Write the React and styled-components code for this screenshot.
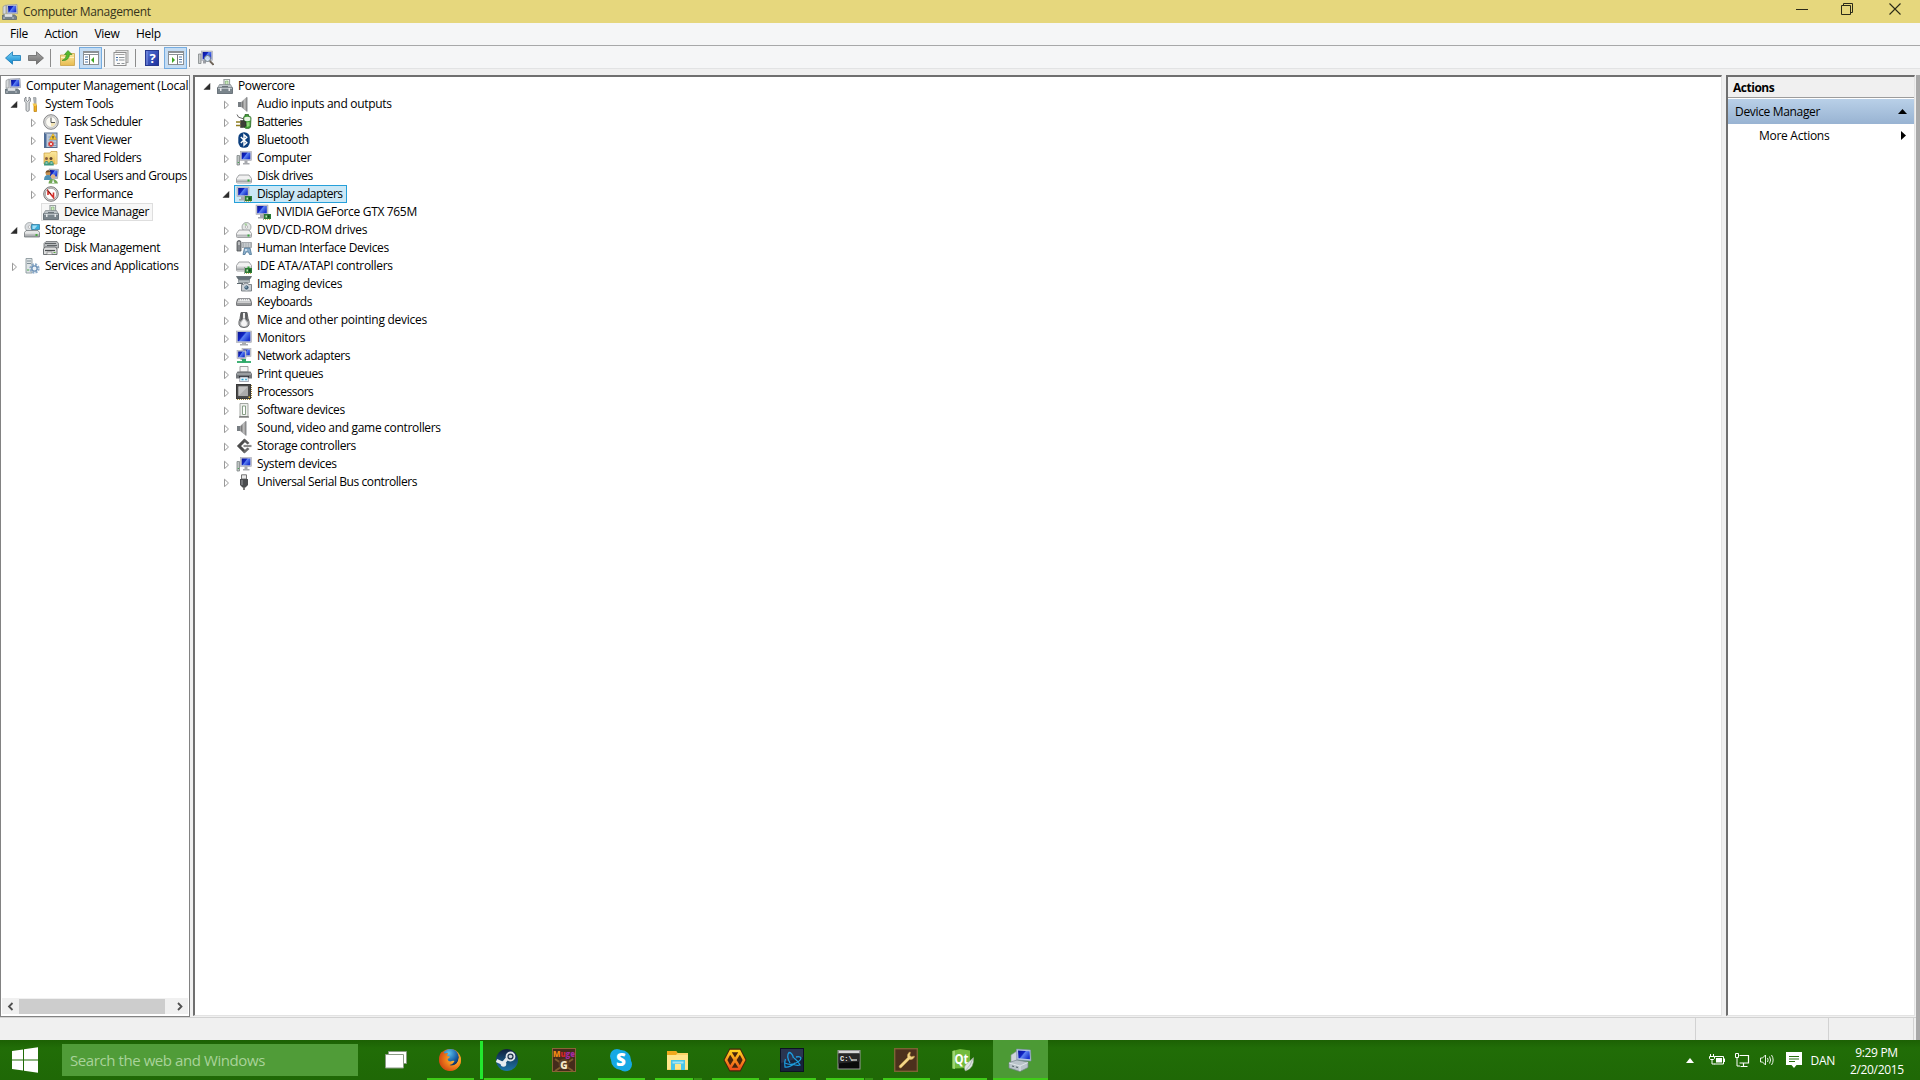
import React from 'react';
import styled, {createGlobalStyle, css} from "styled-components";


const GlobalStyle = createGlobalStyle`
    * {
        box-sizing: border-box;
    }

    body {
        margin: 0;
        overflow: hidden;
        background: #f0f0f0;
        font-family: "Open Sans", "Noto Sans", sans-serif;
        font-size: 12px;
        color: #000;
    }
`

/* ---------- icons ---------- */

const Svg = styled.svg`
    display: block;
    flex: none;
    width: ${({$w}) => $w ?? 16}px;
    height: ${({$h}) => $h ?? 16}px;
`

const DefsSvg = styled(Svg)`
    position: absolute;
`

const Defs = () => (
    <DefsSvg $w={0} $h={0}>
        <defs>
            <linearGradient id="screen" x1="0" y1="0" x2="1" y2="0.6">
                <stop offset="0" stopColor="#0a1590"/>
                <stop offset="0.45" stopColor="#1024c4"/>
                <stop offset="0.55" stopColor="#5c82f2"/>
                <stop offset="1" stopColor="#1a34cf"/>
            </linearGradient>
            <linearGradient id="metal" x1="0" y1="0" x2="0" y2="1">
                <stop offset="0" stopColor="#f4f4f4"/>
                <stop offset="1" stopColor="#9a9da0"/>
            </linearGradient>
            <linearGradient id="darkMetal" x1="0" y1="0" x2="1" y2="0">
                <stop offset="0" stopColor="#5c5c5c"/>
                <stop offset="0.6" stopColor="#c4c4c4"/>
                <stop offset="1" stopColor="#777"/>
            </linearGradient>
            <linearGradient id="blueArrow" x1="0" y1="0" x2="0" y2="1">
                <stop offset="0" stopColor="#7fd4f7"/>
                <stop offset="1" stopColor="#0c86cd"/>
            </linearGradient>
            <linearGradient id="grayArrow" x1="0" y1="0" x2="0" y2="1">
                <stop offset="0" stopColor="#a9a9a9"/>
                <stop offset="1" stopColor="#6f6f6f"/>
            </linearGradient>
            <linearGradient id="folder" x1="0" y1="0" x2="0" y2="1">
                <stop offset="0" stopColor="#fbe9a0"/>
                <stop offset="1" stopColor="#e8bb50"/>
            </linearGradient>
            <linearGradient id="help" x1="0" y1="0" x2="1" y2="1">
                <stop offset="0" stopColor="#5675d8"/>
                <stop offset="1" stopColor="#1c2f9c"/>
            </linearGradient>
            <radialGradient id="fox" cx="0.7" cy="0.4" r="0.8">
                <stop offset="0" stopColor="#ffd23a"/>
                <stop offset="0.5" stopColor="#f0801c"/>
                <stop offset="1" stopColor="#c83a10"/>
            </radialGradient>
            <radialGradient id="globe" cx="0.4" cy="0.25" r="0.8">
                <stop offset="0" stopColor="#5cc3ee"/>
                <stop offset="0.6" stopColor="#1b62a8"/>
                <stop offset="1" stopColor="#0b2450"/>
            </radialGradient>
            <linearGradient id="steam" x1="0" y1="0" x2="0" y2="1">
                <stop offset="0" stopColor="#10203c"/>
                <stop offset="1" stopColor="#1d74a8"/>
            </linearGradient>
            <linearGradient id="orange" x1="0" y1="0" x2="0" y2="1">
                <stop offset="0" stopColor="#ffd21e"/>
                <stop offset="1" stopColor="#f0501a"/>
            </linearGradient>
        </defs>
    </DefsSvg>
)

const Screen = ({x, y, w, h}) => (
    <g>
        <rect x={x} y={y} width={w} height={h} fill="#c9cbd2" stroke="#9a9ca6" strokeWidth="0.5"/>
        <rect x={x + 1.2} y={y + 1} width={w - 2.4} height={h - 2.2} fill="url(#screen)"/>
    </g>
)

const Chip = () => (
    <g>
        <rect x="9" y="10" width="7" height="5" fill="#2b7a35"/>
        <rect x="8" y="9" width="1" height="7" fill="#9aa39a"/>
        <rect x="10.5" y="11.5" width="1.5" height="2" fill="#b9e0a9"/>
        <rect x="13" y="11.5" width="1.5" height="2" fill="#123f18"/>
        <path d="M10 15.5h5" stroke="#c8b85a" strokeDasharray="1 1"/>
    </g>
)

const Drive = ({y = 7, h = 8}) => (
    <g>
        <path d={`M3 ${y}h10l2.500 3.500v${h - 4.5}q0 1-1 1h-13q-1 0-1-1v-${h - 4.5}z`} fill="#f1f1f1" stroke="#8b8e90" strokeWidth="0.8"/>
        <rect x="1" y={y + 3.5} width="14" height={h - 4.5} fill="url(#metal)"/>
        <rect x="11.5" y={y + 4.5} width="2" height="2" fill="#36a83c"/>
    </g>
)

const Computer = () => (
    <>
        <path d="M1 5.5h2.500v9.500H1z" fill="#bfc4c4" stroke="#7f8686" strokeWidth="0.8"/>
        <path d="M1.800 12h1v1h-1z" fill="#2fa03a"/>
        <Screen x={4.5} y={1.5} w={11} h={9}/>
        <path d="M8.500 10.500h3v2.500h2v1.500H7V13h1.500z" fill="#a7a9ae"/>
    </>
)

const Toolbox = () => (
    <>
        <path d="M7 6V1.500h5.500V7" fill="none" stroke="#9aa1a1" strokeWidth="1.200"/>
        <path d="M8.500 3h2.500v4H8.500z" fill="#cfe6c1" stroke="#6aa960" strokeWidth="0.6"/>
        <path d="M2.500 6.500h11l2 3.500H.500z" fill="#bcc3c7" stroke="#7f878b" strokeWidth="0.7"/>
        <path d="M5 8.500h6" stroke="#6a7379"/>
        <rect x="0.5" y="10" width="15" height="5.5" fill="#7a858c" stroke="#59636a" strokeWidth="0.8"/>
        <path d="M1 10.500h14" stroke="#b5bdc2"/>
        <rect x="3" y="10" width="1.5" height="3" fill="#e3e6e8"/>
        <rect x="11.5" y="10" width="1.5" height="3" fill="#e3e6e8"/>
    </>
)

const Speaker = () => (
    <>
        <path d="M1 6h3v5H1z" fill="#777d82"/>
        <path d="M4.500 6l5.500-5v14.500l-5.500-4.500z" fill="url(#darkMetal)" stroke="#909397" strokeWidth="0.5"/>
        <path d="M10.500 1.500v14" stroke="#c2c5c8"/>
    </>
)

const icons = {
    management: (
        <>
            <path d="M1 2.500l3-1.500v9H1z" fill="#d6d9db" stroke="#8f9496" strokeWidth="0.7"/>
            <path d="M4.500 1l10.500-.5.5 9-10.500.500z" fill="#c3c8d4" stroke="#8b91a0" strokeWidth="0.6"/>
            <path d="M6 2l8-.3.4 6.500-8 .4z" fill="url(#screen)"/>
            <path d="M.500 11h12l2 1.500v3H.500z" fill="#77838c" stroke="#535e66" strokeWidth="0.7"/>
            <path d="M3 10.500h7v2H3zM1 14h2M10 14h2" fill="#dfe3e5" stroke="#dfe3e5" strokeWidth="0.7"/>
        </>
    ),
    tools: (
        <>
            <path d="M2 1v3l1.500 1.500L5 4V1q2 .8 1.500 3Q6.500 6 5.200 6.800v7.700q-1.700 2-3.200 0V6.800Q0 5.500.500 3.500.700 1.700 2 1z" fill="#d9dbdd" stroke="#74797d" strokeWidth="0.8"/>
            <path d="M9.500 1.500l2.500.2V9h-1.500z" fill="#b9bec2" stroke="#7b8084" strokeWidth="0.6"/>
            <path d="M10 9h2.500v6.500H10z" fill="#f0b020" stroke="#b87b0a" strokeWidth="0.7"/>
            <path d="M8.500 7.500h4V10h-3z" fill="#f6c74c"/>
        </>
    ),
    clock: (
        <>
            <circle cx="8" cy="8" r="7.300" fill="#ddd" stroke="#858585"/>
            <circle cx="8" cy="8" r="5.400" fill="#fbfaf4" stroke="#a9a9a9" strokeWidth="0.6"/>
            <path d="M8 8.500v4a4.500 4.500 0 0 0 4.500-4z" fill="#f3e4b4"/>
            <path d="M8 3.500V8.500h4" fill="none" stroke="#555" strokeWidth="1"/>
        </>
    ),
    event: (
        <>
            <rect x="1.5" y="1" width="12.5" height="14.5" fill="#bdc9d8" stroke="#556c8d"/>
            <path d="M2.500 2v13" stroke="#4b6c9b" strokeWidth="2"/>
            <path d="M5.500 5h8M5.500 8h8M5.500 11h8M5.500 13.500h8" stroke="#6887b3" strokeWidth="0.7"/>
            <path d="M10 1.500L13.500 7.500H6.500z" fill="#f7c928" stroke="#d29412" strokeWidth="0.5"/>
            <path d="M10 4v2.500" stroke="#333"/>
            <circle cx="8" cy="12" r="2.700" fill="#d63a34"/>
            <path d="M6.800 10.800l2.400 2.400m0-2.400l-2.400 2.400" stroke="#fff" strokeWidth="0.8"/>
        </>
    ),
    shared: (
        <>
            <path d="M1 3h6l1-1.500h6V14H1z" fill="url(#folder)" stroke="#c79b39" strokeWidth="0.7"/>
            <path d="M13 3v11" stroke="#f7e3a0"/>
            <circle cx="3.500" cy="8.500" r="1.500" fill="#8a6042"/>
            <circle cx="8" cy="8.500" r="1.500" fill="#5e4330"/>
            <path d="M1 15.500q0-4.500 2.500-4.500T6 15.500zM5.800 15.500q0-4.500 2.500-4.500t2.500 4.500z" fill="#3c987e"/>
            <path d="M2.500 13h2M7.500 13h2" stroke="#d7efe4"/>
        </>
    ),
    users: (
        <>
            <path d="M6 1l9.500 .5-1 9-7.500-.5z" fill="#b8bfc9" stroke="#868d97" strokeWidth="0.6"/>
            <path d="M7 2l7.500 .5-.6 6-6.900-.5z" fill="url(#screen)"/>
            <circle cx="5" cy="5" r="2.500" fill="#c69252"/>
            <path d="M2.500 4.500q1-3 4-2l.8 1.500z" fill="#6b4a28"/>
            <path d="M1 12q0-5 4-5t4 5z" fill="#4e91b5"/>
            <circle cx="10" cy="8.500" r="2.300" fill="#dfb486"/>
            <path d="M5.500 15.500q.5-5 4.500-4.500t5 4.500z" fill="#73a856"/>
            <path d="M10 11l-1 4h2.500z" fill="#eef4f7"/>
        </>
    ),
    performance: (
        <>
            <circle cx="8" cy="8" r="7.300" fill="#d6d6d6" stroke="#777"/>
            <circle cx="8" cy="8" r="5.700" fill="#fff" stroke="#8b8b8b" strokeWidth="0.7"/>
            <path d="M5 9V5l5.500 6.500V6.500" fill="none" stroke="#d3312c" strokeWidth="1.600"/>
            <path d="M4.500 4.500L8 8" stroke="#551511" strokeWidth="0.8"/>
        </>
    ),
    toolbox: <Toolbox/>,
    storage: (
        <>
            <circle cx="5.500" cy="5" r="4.500" fill="#dadde0" stroke="#90969a" strokeWidth="0.7"/>
            <circle cx="5.500" cy="5" r="1.300" fill="#fff" stroke="#999" strokeWidth="0.6"/>
            <path d="M7.500 2.500h8v5h-8z" fill="#38aedb" stroke="#24739b" strokeWidth="0.7"/>
            <path d="M8.500 3.500h5l-3 3.500h-2z" fill="#a5def4"/>
            <path d="M2 8.500h12l1.500 2v4.500H.500v-4.500z" fill="url(#metal)" stroke="#72787b" strokeWidth="0.8"/>
            <path d="M1 11h14" stroke="#fff" strokeWidth="0.7"/>
            <rect x="11.5" y="12" width="2" height="2" fill="#48aa3f"/>
        </>
    ),
    disk: (
        <>
            <path d="M3 1.500h11l1.500 2V8H1V3.500z" fill="#b9bcbe" stroke="#6b6f72" strokeWidth="0.8"/>
            <path d="M2 3.500h11M4 5.500h10" stroke="#5f6467"/>
            <path d="M2 7h10.500l1.500 2v5.500H.500V9z" fill="#dcdddd" stroke="#5f6366" strokeWidth="0.9"/>
            <path d="M2 10.500h10" stroke="#4a4d50" strokeWidth="1.200"/>
            <path d="M4 12h5v2.500H4z" fill="#f2f2f2" stroke="#777" strokeWidth="0.6"/>
            <path d="M10.500 12.500h2" stroke="#54a63f"/>
        </>
    ),
    services: (
        <>
            <path d="M2 .500h6v14.500H2z" fill="#dfe4e6" stroke="#8b979d" strokeWidth="0.9"/>
            <path d="M3 3h4M3 5.500h4" stroke="#7f8e96"/>
            <path d="M3 12h2" stroke="#49a644"/>
            <circle cx="10.500" cy="10.500" r="4" fill="none" stroke="#8dabc9" strokeWidth="2.400" strokeDasharray="2 1.140"/>
            <circle cx="10.500" cy="10.500" r="2.600" fill="#eaf1f7" stroke="#6f93b7" strokeWidth="1.300"/>
        </>
    ),
    speaker: <g transform="translate(1 0)"><Speaker/></g>,
    battery: (
        <>
            <path d="M9 2V.500h3.500V2q2.500.3 2.500 2l-.5 9q-.5 1.500-3 1.500T8 13L7.500 4Q7.500 2.300 9 2z" fill="#3f9c35" stroke="#2f6628" strokeWidth="0.8"/>
            <path d="M8.300 3.500q3-1.500 6 0v3q-3 1.500-6 0z" fill="#e6f4e1"/>
            <path d="M10 8.500l3.500-.5v4l-2.500 1z" fill="#8fd677"/>
            <path d="M1 .500q1 3.500 4 3.500t3 3" fill="none" stroke="#666" strokeWidth="1"/>
            <path d="M4.500 6.500h3L10 8v4l-2.500 1.500h-3z" fill="#3d3f37" stroke="#222" strokeWidth="0.5"/>
            <path d="M0 8h4.500M0 11.500h4.500" stroke="#8f7d20" strokeWidth="1.600"/>
        </>
    ),
    bluetooth: (
        <>
            <rect x="2.300" y="0.200" width="11.500" height="15.600" rx="5.500" fill="#0c3f7e"/>
            <path d="M4.800 5l6 5.700L8 13.200V2.800l2.800 2.500-6 5.700" fill="none" stroke="#fff" strokeWidth="1.400"/>
        </>
    ),
    computer: <Computer/>,
    drive: <Drive/>,
    display: (
        <>
            <Screen x={1} y={1} w={12} h={9.5}/>
            <path d="M5 10.500h3v2.500h1v1.500H3V13h2z" fill="#a7a9ae"/>
            <Chip/>
        </>
    ),
    dvd: (
        <>
            <circle cx="10.500" cy="5" r="4.500" fill="#e2e5e4" stroke="#8f9694" strokeWidth="0.8"/>
            <path d="M10.500 5L8 1.500h3z" fill="#a5cf9b"/>
            <circle cx="10.500" cy="5" r="1.200" fill="#fff" stroke="#999" strokeWidth="0.6"/>
            <Drive y={8} h={7.5}/>
        </>
    ),
    hid: (
        <>
            <path d="M1 2.500q0-2 2-2t2 2V11H1z" fill="#85898d" stroke="#4c5054" strokeWidth="0.8"/>
            <path d="M3 2v3" stroke="#eee"/>
            <path d="M6 2.500h9.500v5H6z" fill="#d4d8da" stroke="#888d90" strokeWidth="0.7"/>
            <path d="M7 4h8M7 6h8" stroke="#858b90" strokeDasharray="1 .700"/>
            <path d="M8.500 8h5.500l1.500 6.500h-2l-1-2.500H10l-1 2.500H7z" fill="#8baecb" stroke="#4c7696" strokeWidth="0.8"/>
            <path d="M9 10h2M10 9v2" stroke="#fff" strokeWidth="0.7"/>
        </>
    ),
    ide: <><Drive y={4} h={9}/><Chip/></>,
    imaging: (
        <>
            <path d="M.500 .500h15l-2 3H2.500z" fill="#647078" stroke="#424c52" strokeWidth="0.6"/>
            <path d="M2.500 4h11v2.500h-11z" fill="#b8c0c4" stroke="#717a7f" strokeWidth="0.6"/>
            <path d="M1 7.500h6" stroke="#5d686e"/>
            <path d="M5.500 8.500h2l1-1.500h3l1 1.500h3v6.500h-10z" fill="#c7ccd0" stroke="#666d72" strokeWidth="0.8"/>
            <circle cx="10.500" cy="11.500" r="2.600" fill="#45647a" stroke="#e9eef2" strokeWidth="0.8"/>
            <circle cx="10" cy="11" r="0.800" fill="#bcd6e6"/>
        </>
    ),
    keyboard: (
        <>
            <path d="M3 4h10q1.500 0 2 1.500l1 3v2q0 1.500-1.500 1.500h-13Q0 12 0 10.500v-2l1-3Q1.500 4 3 4z" fill="#77797c"/>
            <path d="M3 4.700h10l2 4H1z" fill="#eceded"/>
            <path d="M3 5.700h10M2.500 7.500h11" stroke="#9c9fa2" strokeDasharray="1 1"/>
            <path d="M1 10h14" stroke="#c5c6c7" strokeWidth="0.8"/>
        </>
    ),
    mouse: (
        <>
            <path d="M5 .500h6l1 6q1.500 3 1 6-.5 3-5 3t-5-3q-.5-3 1-6z" fill="#b5b7b9" stroke="#555759" strokeWidth="0.9"/>
            <path d="M5 .800h2L6.800 7 4 10zM11 .800H9L9.200 7 12 10z" fill="#5b5d5f"/>
            <path d="M8 1v5" stroke="#fff" strokeWidth="1.500"/>
            <path d="M8 6.500l3 4.500q0 3.500-3 3.500T5 11z" fill="#f4f4f4"/>
        </>
    ),
    monitor: (
        <>
            <Screen x={0.5} y={1} w={15} h={11.5}/>
            <path d="M6 12.500h4v1.500h2v1.500H4V14h2z" fill="#a9abb0"/>
        </>
    ),
    network: (
        <>
            <Screen x={6} y={0.5} w={9} h={8}/>
            <Screen x={1} y={2.5} w={9} h={8}/>
            <path d="M4.500 10.500h3V12h-3z" fill="#9b9da3"/>
            <path d="M1 14h14" stroke="#2da968" strokeWidth="1.800"/>
            <path d="M8 11v3.500" stroke="#2da968" strokeWidth="4"/>
        </>
    ),
    printer: (
        <>
            <path d="M4 .500h8V6H4z" fill="#f5f5f5" stroke="#888" strokeWidth="0.8"/>
            <path d="M1.500 5.500h13L16 8v4.500H0V8z" fill="#73777b"/>
            <path d="M1 8h14" stroke="#c4c7c9"/>
            <path d="M3 10h10v2H3z" fill="#2f3235"/>
            <path d="M4 11h8l.5 4.500h-9z" fill="#e7f4fa" stroke="#778" strokeWidth="0.6"/>
            <path d="M5.500 13.500h2" stroke="#28a4d6" strokeWidth="1.500"/>
            <path d="M9 13.500h2" stroke="#5ab1d1" strokeWidth="1.500"/>
        </>
    ),
    cpu: (
        <>
            <path d="M15.500 1v14M1 15.500h14" stroke="#a4893d" strokeDasharray="1 1"/>
            <rect x="0.5" y="0.5" width="14" height="14" fill="#4a4a4a" stroke="#383838"/>
            <rect x="2.5" y="2.5" width="9.5" height="9.5" fill="#ababab"/>
            <path d="M2.500 2.500h9.500l-9.500 9.500z" fill="#c4c4c4"/>
            <path d="M12.500 12.500h1.500v1.500h-1.500z" fill="#e0b83c"/>
        </>
    ),
    software: (
        <>
            <path d="M4 1.500h8v13H4z" fill="#edefec" stroke="#9a9e9a" strokeWidth="0.9"/>
            <path d="M6.500 12.500V4h3v8.500z" fill="#fff" stroke="#7b937b" strokeWidth="0.9"/>
            <path d="M3 15h10" stroke="#666" strokeWidth="1.200"/>
        </>
    ),
    sound: <Speaker/>,
    controller: (
        <>
            <path d="M9 2L3 8l6 6" fill="none" stroke="#4b4b4b" strokeWidth="3"/>
            <path d="M7 2.500l1.500-2L13.500 5l-2 1.500z" fill="#5a5a5a"/>
            <path d="M7 13.500l1.500 2 5-4.500-2-1.500z" fill="#6b6b6b"/>
            <path d="M7.500 8h8" stroke="#8b8b8b" strokeWidth="2.200"/>
        </>
    ),
    usb: (
        <>
            <path d="M5.500.800h5V5h-5z" fill="#e8e8e8" stroke="#666" strokeWidth="0.9"/>
            <path d="M4 5h8v6l-2.500 2.500h-3L4 11z" fill="#4b4d50"/>
            <path d="M6 6v5" stroke="#8f9296" strokeWidth="1.200"/>
            <path d="M8 13v3" stroke="#555" strokeWidth="1.500"/>
        </>
    ),
    back: <path d="M.500 8L7.500 1.800v3.700h8v5h-8v3.700z" fill="url(#blueArrow)" stroke="#1878b5" strokeWidth="0.8"/>,
    forward: <path d="M15.500 8L8.500 1.800v3.700h-8v5h8v3.700z" fill="url(#grayArrow)" stroke="#666" strokeWidth="0.8"/>,
    folderUp: (
        <>
            <path d="M.500 5h4L6 3.500h8.500V15.500H.500z" fill="url(#folder)" stroke="#c9a145" strokeWidth="0.8"/>
            <path d="M1 7.500h13" stroke="#fff3c4"/>
            <path d="M2 10.500Q6 9.500 6.500 4.500H4.500L8 .500l4 4H9.500Q9 11 2 10.500z" fill="#55b82d" stroke="#2f8417" strokeWidth="0.6"/>
        </>
    ),
    properties: (
        <>
            <rect x="3" y="0.5" width="12" height="12" fill="#e4e4e4" stroke="#a5a5a5"/>
            <rect x="1" y="2.5" width="12" height="13" fill="#fafafa" stroke="#8f8f8f"/>
            <path d="M2.500 4.500h9" stroke="#a5a5a5"/>
            <path d="M3 7.500h2M3 10h2" stroke="#3f6fa9"/>
            <path d="M6 7.500h5.500M6 10h5.500M4 13.500h3M8.500 13.500h3" stroke="#8f9599"/>
        </>
    ),
    help: (
        <>
            <rect x="1.5" y="0.5" width="13" height="15" fill="url(#help)" stroke="#26388e"/>
            <path d="M3 1v14" stroke="#8094df"/>
            <text x="8.700" y="13" fontSize="13" fontWeight="700" fill="#fff" textAnchor="middle">?</text>
        </>
    ),
    treePane: (
        <>
            <rect x="0.5" y="1.5" width="15" height="13" fill="#fff" stroke="#8b8f93"/>
            <path d="M1 2.500h14M1 4.500h14" stroke="#8c9297"/>
            <path d="M6.500 5v9.500" stroke="#777"/>
            <path d="M2 7h3M2 9.500h3M2 12h3" stroke="#557ba8"/>
            <path d="M11 7v6L8 10z" fill="#3da51f"/>
        </>
    ),
    actionPane: (
        <>
            <rect x="0.5" y="1.5" width="15" height="13" fill="#fff" stroke="#8b8f93"/>
            <path d="M1 2.500h14M1 4.500h14" stroke="#8c9297"/>
            <path d="M9.500 5v9.500" stroke="#777"/>
            <path d="M11 7h3M11 9.500h3M11 12h3" stroke="#557ba8"/>
            <path d="M4 7v6l3-3z" fill="#3da51f"/>
        </>
    ),
    scan: (
        <>
            <path d="M.500 4h2.500v9.500H.500z" fill="#c9cccd" stroke="#808688" strokeWidth="0.8"/>
            <Screen x={3.5} y={1} w={11} h={9.5}/>
            <path d="M5 10.500h3v3H5z" fill="#9c9fa5"/>
            <circle cx="9.500" cy="8.500" r="3" fill="#dcecf7" fillOpacity="0.85" stroke="#6f7b85"/>
            <path d="M11.800 11l3.700 3.800" stroke="#6e6458" strokeWidth="1.800"/>
        </>
    ),
}

const Icon = ({name, size = 16}) => (
    <Svg $w={size} $h={size} viewBox="0 0 16 16">{icons[name]}</Svg>
)

/* ---------- window frame ---------- */

const Desktop = styled.div`
    width: 1920px;
    height: 1080px;
    display: flex;
    flex-direction: column;
    overflow: hidden;
    background: #f0f0f0;
`

const Label = styled.span`
    white-space: pre;
    letter-spacing: ${({$ls}) => -0.28 - ($ls || 0)}px;
`

const TitleBar = styled.div`
    flex: none;
    height: 23px;
    display: flex;
    align-items: center;
    padding-left: 2px;
    gap: 5px;
    background: #e6d77d;
    color: #36341c;
`

const WindowButtons = styled.div`
    display: flex;
    gap: 31px;
    margin: -5px 18px 0 auto;
    align-items: center;
`

const CloseButton = styled.div`
    margin-left: 3px;
`

const MenuBar = styled.div`
    flex: none;
    height: 23px;
    display: flex;
    align-items: center;
    gap: 16.5px;
    padding: 0 0 2px 10px;
    background: #f5f6f7;
    border-bottom: 1px solid #a7a8a9;
`

const Toolbar = styled.div`
    flex: none;
    height: 23px;
    display: flex;
    align-items: center;
    padding: 1px 0 0 5px;
    background: #f5f6f7;
    border-bottom: 1px solid #e2e3e4;
`

const ToolItem = styled.div`
    display: flex;
    align-items: center;
    justify-content: center;
    height: 22px;
    padding-top: 1px;
    margin-left: ${({$gap}) => $gap || 0}px;

    ${({$pressed}) => $pressed && css`
        width: 23px;
        background: #c4dcf3;
        border: 1px solid #75ace0;
    `}
`

const ToolSeparator = styled.div`
    width: 1px;
    height: 18px;
    margin-left: ${({$gap}) => $gap || 0}px;
    background: #8c8c8c;
`

const Workspace = styled.div`
    flex: none;
    height: 948px;
    display: flex;
    background: #f0f0f0;
    padding-top: 6px;
`

const TreePane = styled.div`
    width: 190px;
    height: 942px;
    display: flex;
    flex-direction: column;
    padding: 1px;
    background: #fff;
    border: 1px solid #828282;
`

const SunkenPane = styled.div`
    height: 941px;
    width: ${({$w}) => $w}px;
    margin-left: ${({$gap}) => $gap}px;
    background: #fff;
    border: 1px solid #e3e3e3;
    border-top: 2px solid #6f6f6f;
    border-left: 2px solid #6f6f6f;
`

const WindowEdge = styled.div`
    width: 4px;
    margin-left: auto;
    background: #a9a9a9;
`

const Row = styled.div`
    display: flex;
    align-items: center;
    height: 18px;
    padding-left: ${({$indent}) => $indent}px;
`

const ArrowSlot = styled.div`
    flex: none;
    width: 14px;
    display: flex;
`

const RowLabel = styled.div`
    display: flex;
    align-items: center;
    height: 18px;
    gap: 5px;
    padding: 0 3px 0 1px;
    border: 1px solid transparent;
    margin-left: -2px;

    ${Label} {
        line-height: 16px;
    }

    ${({$state}) => $state === "selected" && css`
        background: #cbe8f6;
        border-color: #26a0da;
    `}
    ${({$state}) => $state === "inactive" && css`
        background: #f7f7f7;
        border-color: #dedede;
    `}
`

const Arrow = ({open}) => (
    <Svg $w={8} $h={9} viewBox="0 0 8 9">
        {open
            ? <path d="M7 1.500v6H1z" fill="#2b2b2b" stroke="#2b2b2b" strokeWidth="0.5"/>
            : <path d="M2.500 1.200v7.500L6.500 5z" fill="#fff" stroke="#9a9a9a"/>}
    </Svg>
)

const TreeRow = ({item, base}) => {
    const {level, icon, text, arrow, state, ls, root} = item;

    return (
        <Row $indent={root ? 3 : base + level * 19}>
            {!root && <ArrowSlot>{arrow && <Arrow open={arrow === "open"}/>}</ArrowSlot>}
            <RowLabel $state={state}>
                <Icon name={icon}/>
                <Label $ls={ls}>{text}</Label>
            </RowLabel>
        </Row>
    )
}

const TreeList = styled.div`
    flex: 1;
`

const ScrollBar = styled.div`
    height: 16px;
    display: flex;
    align-items: center;
    margin-bottom: 1px;
    background: #f0f0f0;
`

const ScrollArrow = styled.div`
    width: 17px;
    display: flex;
    justify-content: center;
`

const ScrollThumb = styled.div`
    width: 146px;
    height: 15px;
    margin-right: auto;
    background: #cdcdcd;
`

const ActionsTitle = styled.div`
    height: 21px;
    padding: 0 5px;
    background: #f0f0f0;
    border-bottom: 1px solid #9c9c9c;
    font-weight: 700;
    line-height: 22px;
    margin-bottom: 1px;
`

const ActionsRow = styled.div`
    height: ${({$header}) => $header ? 25 : 24}px;
    display: flex;
    align-items: center;
    justify-content: space-between;
    padding: 0 7px 1px ${({$indent}) => $indent}px;
    background: ${({$header}) => $header ? "linear-gradient(#b9d0e8, #98b3d2)" : "#fff"};
`

const StatusBar = styled.div`
    flex: none;
    height: 23px;
    display: flex;
    justify-content: flex-end;
    background: #f0f0f0;
    border-right: 4px solid #a9a9a9;
    box-shadow: inset 0 1px 0 #d2d2d2;
`

const StatusCell = styled.div`
    width: ${({$w}) => $w}px;
    margin-top: 1px;
    border-left: 1px solid #d2d2d2;
`

/* ---------- taskbar ---------- */

const TaskBar = styled.div`
    flex: none;
    height: 40px;
    display: flex;
    align-items: center;
    background: linear-gradient(#1c6103, #216d07 20%, #1f6806);
    color: #fff;
`

const StartButton = styled.div`
    width: 62px;
    padding: 0 0 1px 12px;
`

const SearchBox = styled.div`
    width: 296px;
    height: 32px;
    padding-left: 8px;
    line-height: 33px;
    font-size: 15px;
    color: #a9d39a;
    background: #509c38;
`

const TaskView = styled.div`
    width: 65px;
    padding-left: 27px;
`

const Apps = styled.div`
    display: flex;
    gap: 2px;
    height: 40px;
`

const AppCell = styled.div`
    position: relative;
    width: 55px;
    height: 40px;
    display: flex;
    align-items: center;
    justify-content: center;
    padding: 0 2px 1px 0;
    background: ${({$active}) => $active ? "#4c9a35" : "transparent"};
`

const Underline = styled.div`
    position: absolute;
    bottom: 0;
    height: 2px;
    left: ${({$x}) => $x}px;
    width: ${({$w}) => $w}px;
    background: ${({$dim}) => $dim ? "#339313" : "#3fcb17"};
`

const Alert = styled.div`
    position: absolute;
    left: 0;
    top: 1px;
    width: 3px;
    height: 38px;
    background: #22e82e;
`

const Tray = styled.div`
    display: flex;
    align-items: center;
    margin-left: auto;
    padding-right: 17px;
`

const TrayItem = styled.div`
    margin-right: ${({$gap}) => $gap}px;
    font-size: 12px;
`

const Clock = styled.div`
    width: 53px;
    padding-top: 1px;
    text-align: center;
    line-height: 17px;
    font-size: 12px;
    white-space: nowrap;
`

const apps = [
    {
        id: "firefox", underline: "full", icon: (
            <>
                <circle cx="12" cy="12" r="11" fill="url(#fox)"/>
                <circle cx="12.500" cy="9.500" r="8.500" fill="url(#globe)"/>
                <path d="M1.500 8Q2.500 4 4.500 3.500 5 5 7 5.500q2-.8 3.500 0-1.800 1-1.500 2.500 1.500 0 3 .8-.5 1.400-2.500 2.200.5 2.500 3 2.500 2-1 4-.5-1.500 3.500-5 4 6 2 8.500-4T18 4q5 3 5 8.500-.5 7-7 9.500-8 2-12.500-4Q.5 14 1.500 8z" fill="url(#fox)"/>
            </>
        )
    },
    {
        id: "steam", underline: "full", alert: true, icon: (
            <>
                <circle cx="12" cy="12" r="11" fill="url(#steam)"/>
                <path d="M1.500 12.500l6.500 3 5-6" fill="none" stroke="#e6ebef" strokeWidth="3.400"/>
                <circle cx="15.500" cy="8.500" r="4" fill="#20354d" stroke="#dfe5ea" strokeWidth="1.800"/>
                <circle cx="15.500" cy="8.500" r="1.800" fill="#cfd8df"/>
                <circle cx="8.500" cy="16" r="2.800" fill="#e6ebef"/>
            </>
        )
    },
    {
        id: "mugen", icon: (
            <>
                <rect x="0.5" y="0.5" width="23" height="23" fill="#442b1b" stroke="#8b6438"/>
                <path d="M3 11l18 12M21 11L3 23" stroke="#7d5d2d" strokeWidth="2"/>
                <circle cx="12" cy="16" r="5.500" fill="#5a3b22"/>
                <text x="1" y="8.500" fontSize="8.500" fontWeight="800" textLength="22" lengthAdjust="spacingAndGlyphs">
                    <tspan fill="#ef8a13">M</tspan><tspan fill="#d2262b">u</tspan><tspan fill="#a32aa0">ge</tspan>
                </text>
                <text x="12" y="20.500" fontSize="10" fontWeight="800" fill="#f5e7c8" textAnchor="middle">G</text>
            </>
        )
    },
    {
        id: "skype", underline: "full", icon: (
            <>
                <circle cx="8" cy="8" r="7" fill="#16a9e4"/>
                <circle cx="16" cy="16.500" r="7" fill="#16a9e4"/>
                <circle cx="12" cy="12" r="10" fill="#16a9e4"/>
                <text x="12" y="18.300" fontSize="17" fontWeight="800" fill="#fff" textAnchor="middle">S</text>
            </>
        )
    },
    {
        id: "explorer", underline: "split", icon: (
            <>
                <path d="M1 3h9l1.500 2H22v17H1z" fill="#fbd468"/>
                <path d="M1 3h9l1.500 2L10 7H1z" fill="#f0a91c"/>
                <path d="M1 7h21v14H1z" fill="#ffe58a"/>
                <path d="M5 12h14v10h-4v-6H9v6H5z" fill="#48c4e8"/>
                <path d="M6.500 13.500h11v2h-11z" fill="#a4e4f5"/>
            </>
        )
    },
    {
        id: "xsplit", underline: "full", icon: (
            <>
                <path d="M7 1.500h10L22.500 12 17 22.500H7L1.500 12z" fill="#46240c" stroke="#46240c" strokeWidth="1.800"/>
                <path d="M7.700 3h8.600L21 12l-4.700 9H7.700L3 12zM7 4l10 16M17 4L7 20" fill="none" stroke="url(#orange)" strokeWidth="2.600"/>
            </>
        )
    },
    {
        id: "battlenet", underline: "full", icon: (
            <>
                <rect x="0.5" y="0.5" width="23" height="23" fill="#17223b" stroke="#0c1224"/>
                <path d="M1 1h22v8L1 15z" fill="#2a3550"/>
                <path d="M10 15Q6 8 9 4.500q3 0 4.500 5.500M5 15q6 3 13-1 3-2 3-4-1-2-5-1M5.500 11Q4 14 5 19q4 1 10-4M14 10q4 3 6 7-3 1-8-1" fill="none" stroke="#1d9bdd" strokeWidth="1.300"/>
            </>
        )
    },
    {
        id: "cmd", underline: "split", icon: (
            <>
                <rect x="1" y="2.5" width="22" height="18.5" fill="#0a0a0a" stroke="#9a9a9a"/>
                <rect x="1.5" y="3" width="21" height="2.5" fill="#d7d7d7"/>
                <path d="M1.500 5.500h21v8l-21 2z" fill="#272727"/>
                <text x="3" y="12.500" fontSize="7" fontWeight="700" fill="#eee" fontFamily="Liberation Mono, monospace">C:\</text>
                <path d="M14.500 12h5.500" stroke="#eee" strokeWidth="1.200"/>
            </>
        )
    },
    {
        id: "wrench", underline: "full", icon: (
            <>
                <rect x="0.7" y="0.7" width="22.6" height="22.6" fill="#4c301d" stroke="#7c6534" strokeWidth="1.400"/>
                <path d="M5 18l8.500-8.500Q12.500 6.500 15.500 4l1 .300-.7 3 1.500 1.500 3-.8.200 1Q18.500 12.500 15.500 11.500L7 20q-2 .5-2-2z" fill="#f2d487" stroke="#b28b3e" strokeWidth="0.600"/>
            </>
        )
    },
    {
        id: "qt", underline: "full", icon: (
            <>
                <path d="M1.500 3L9 1l10 1.500V20l-17.500.5z" fill="#72bb3d"/>
                <path d="M1.500 3L4 2.500V21l-2.500-.5z" fill="#9ed572"/>
                <text x="3.500" y="16" fontSize="14" fontWeight="700" fill="#fff" textLength="14" lengthAdjust="spacingAndGlyphs">Qt</text>
                <path d="M22.500 9.500q1 11-8 13.500-3-4 2-8z" fill="#dfe5e3" stroke="#8aa083" strokeWidth="0.500"/>
                <path d="M22 10.500q-2 7-8 12.500" stroke="#9ba7a0" fill="none" strokeWidth="0.700"/>
            </>
        )
    },
    {
        id: "management", underline: "active", active: true, icon: (
            <>
                <path d="M3 7l6-4v10l-6 3z" fill="#cfd6da" stroke="#87929a" strokeWidth="0.600"/>
                <path d="M8.500 1l14 1 .5 11-14-1z" fill="#b9c8e4" stroke="#7f8fb4" strokeWidth="0.600"/>
                <path d="M10 2.500l11.500.8.5 8-11.500-1z" fill="url(#screen)"/>
                <path d="M1 14.500l8-2.500 11 2v5.500L12 23.500 1 20z" fill="#b9c3ca" stroke="#76838c" strokeWidth="0.700"/>
                <path d="M1 15l11 3 8-3.500M12 18v5" fill="none" stroke="#e8edf0" strokeWidth="0.800"/>
                <path d="M4 18l2 .5M8 19l2 .5" stroke="#55626b" strokeWidth="1.200"/>
            </>
        )
    },
]

const AppButton = ({app}) => (
    <AppCell $active={app.active}>
        {app.alert && <Alert/>}
        <Svg $w={24} $h={24} viewBox="0 0 24 24">{app.icon}</Svg>
        {app.underline === "full" && <Underline $x={4} $w={47}/>}
        {app.underline === "active" && <Underline $x={0} $w={55}/>}
        {app.underline === "split" && (
            <>
                <Underline $x={4} $w={38}/>
                <Underline $x={43} $w={8} $dim/>
            </>
        )}
    </AppCell>
)

/* ---------- data ---------- */

const consoleTree = [
    {level: 0, icon: "management", text: "Computer Management (Local", root: true},
    {level: 0, icon: "tools", text: "System Tools", arrow: "open", ls: 0.13},
    {level: 1, icon: "clock", text: "Task Scheduler", arrow: "closed", ls: 0.15},
    {level: 1, icon: "event", text: "Event Viewer", arrow: "closed", ls: 0.1},
    {level: 1, icon: "shared", text: "Shared Folders", arrow: "closed", ls: 0.2},
    {level: 1, icon: "users", text: "Local Users and Groups", arrow: "closed", ls: 0.17},
    {level: 1, icon: "performance", text: "Performance", arrow: "closed", ls: 0.07},
    {level: 1, icon: "toolbox", text: "Device Manager", state: "inactive", ls: 0.05},
    {level: 0, icon: "storage", text: "Storage", arrow: "open", ls: 0.1},
    {level: 1, icon: "disk", text: "Disk Management", ls: 0.05},
    {level: 0, icon: "services", text: "Services and Applications", arrow: "closed", ls: 0.03},
]

const devices = [
    {level: 0, icon: "toolbox", text: "Powercore", arrow: "open", ls: 0.1},
    {level: 1, icon: "speaker", text: "Audio inputs and outputs", arrow: "closed", ls: 0.02},
    {level: 1, icon: "battery", text: "Batteries", arrow: "closed", ls: 0.3},
    {level: 1, icon: "bluetooth", text: "Bluetooth", arrow: "closed", ls: 0.1},
    {level: 1, icon: "computer", text: "Computer", arrow: "closed"},
    {level: 1, icon: "drive", text: "Disk drives", arrow: "closed", ls: 0.15},
    {level: 1, icon: "display", text: "Display adapters", arrow: "open", state: "selected", ls: 0.2},
    {level: 2, icon: "display", text: "NVIDIA GeForce GTX 765M", ls: 0.05},
    {level: 1, icon: "dvd", text: "DVD/CD-ROM drives", arrow: "closed", ls: -0.1},
    {level: 1, icon: "hid", text: "Human Interface Devices", arrow: "closed", ls: 0.08},
    {level: 1, icon: "ide", text: "IDE ATA/ATAPI controllers", arrow: "closed", ls: 0.04},
    {level: 1, icon: "imaging", text: "Imaging devices", arrow: "closed", ls: -0.03},
    {level: 1, icon: "keyboard", text: "Keyboards", arrow: "closed", ls: 0.2},
    {level: 1, icon: "mouse", text: "Mice and other pointing devices", arrow: "closed", ls: -0.02},
    {level: 1, icon: "monitor", text: "Monitors", arrow: "closed"},
    {level: 1, icon: "network", text: "Network adapters", arrow: "closed", ls: 0.2},
    {level: 1, icon: "printer", text: "Print queues", arrow: "closed", ls: 0.15},
    {level: 1, icon: "cpu", text: "Processors", arrow: "closed", ls: 0.2},
    {level: 1, icon: "software", text: "Software devices", arrow: "closed", ls: 0.12},
    {level: 1, icon: "sound", text: "Sound, video and game controllers", arrow: "closed", ls: 0.04},
    {level: 1, icon: "controller", text: "Storage controllers", arrow: "closed", ls: 0.1},
    {level: 1, icon: "computer", text: "System devices", arrow: "closed", ls: 0.09},
    {level: 1, icon: "usb", text: "Universal Serial Bus controllers", arrow: "closed", ls: 0.14},
]

const App = () => {
    return (
        <Desktop>
            <GlobalStyle/>
            <Defs/>
            <TitleBar>
                <Icon name="management"/>
                <Label $ls={0.04}>Computer Management</Label>
                <WindowButtons>
                    <Svg $w={14} $h={14} viewBox="0 0 14 14"><path d="M1 7.500h12" stroke="#2b2a18"/></Svg>
                    <Svg $w={14} $h={14} viewBox="0 0 14 14">
                        <path d="M1.500 3.500h9v9h-9zM3.500 3.500v-2h9v9h-2" fill="none" stroke="#2b2a18"/>
                    </Svg>
                    <CloseButton>
                        <Svg $w={14} $h={14} viewBox="0 0 14 14"><path d="M1.500 1.500l11 11m0-11l-11 11" stroke="#2b2a18" strokeWidth="1.100"/></Svg>
                    </CloseButton>
                </WindowButtons>
            </TitleBar>
            <MenuBar>
                {["File", "Action", "View", "Help"].map((text) => <Label key={text}>{text}</Label>)}
            </MenuBar>
            <Toolbar>
                <ToolItem><Icon name="back"/></ToolItem>
                <ToolItem $gap={7}><Icon name="forward"/></ToolItem>
                <ToolSeparator $gap={6}/>
                <ToolItem $gap={9}><Icon name="folderUp"/></ToolItem>
                <ToolItem $gap={3} $pressed><Icon name="treePane"/></ToolItem>
                <ToolSeparator $gap={2}/>
                <ToolItem $gap={8}><Icon name="properties"/></ToolItem>
                <ToolSeparator $gap={6}/>
                <ToolItem $gap={8}><Icon name="help"/></ToolItem>
                <ToolItem $gap={4} $pressed><Icon name="actionPane"/></ToolItem>
                <ToolSeparator $gap={2}/>
                <ToolItem $gap={8}><Icon name="scan"/></ToolItem>
            </Toolbar>
            <Workspace>
                <TreePane>
                    <TreeList>
                        {consoleTree.map((item) => <TreeRow key={item.text} item={item} base={8}/>)}
                    </TreeList>
                    <ScrollBar>
                        <ScrollArrow>
                            <Svg $w={8} $h={9} viewBox="0 0 8 9"><path d="M5.500 1L2 4.500 5.500 8" fill="none" stroke="#505050" strokeWidth="1.800"/></Svg>
                        </ScrollArrow>
                        <ScrollThumb/>
                        <ScrollArrow>
                            <Svg $w={8} $h={9} viewBox="0 0 8 9"><path d="M2 1l3.500 3.500L2 8" fill="none" stroke="#505050" strokeWidth="1.800"/></Svg>
                        </ScrollArrow>
                    </ScrollBar>
                </TreePane>
                <SunkenPane $w={1529} $gap={3}>
                    {devices.map((item) => <TreeRow key={item.text} item={item} base={8}/>)}
                </SunkenPane>
                <SunkenPane $w={189} $gap={4}>
                    <ActionsTitle><Label $ls={0.2}>Actions</Label></ActionsTitle>
                    <ActionsRow $header $indent={7}>
                        <Label $ls={0.05}>Device Manager</Label>
                        <Svg $w={9} $h={5} viewBox="0 0 9 5"><path d="M0 5h9L4.500 0z"/></Svg>
                    </ActionsRow>
                    <ActionsRow $indent={31}>
                        <Label>More Actions</Label>
                        <Svg $w={6} $h={9} viewBox="0 0 6 9"><path d="M0 0v9l5-4.500z"/></Svg>
                    </ActionsRow>
                </SunkenPane>
                <WindowEdge/>
            </Workspace>
            <StatusBar>
                <StatusCell $w={133}/>
                <StatusCell $w={85}/>
                <StatusCell $w={3}/>
            </StatusBar>
            <TaskBar>
                <StartButton>
                    <Svg $w={26} $h={26} viewBox="0 0 26 26">
                        <path d="M0 4l11-1.500V12.500H0zM12 2.300L26 .300v12.200H12zM0 13.500h11v10L0 22zM12 13.500h14v12.200l-14-2z" fill="#fff"/>
                    </Svg>
                </StartButton>
                <SearchBox><Label $ls={0.14}>Search the web and Windows</Label></SearchBox>
                <TaskView>
                    <Svg $w={22} $h={18} viewBox="0 0 22 18">
                        <path d="M3.500.500h18v12h-18z" fill="#fff" stroke="#8b9b86"/>
                        <path d="M.500 3.500h18v13.500H.500z" fill="#fff" stroke="#8b9b86"/>
                    </Svg>
                </TaskView>
                <Apps>
                    {apps.map((app) => <AppButton key={app.id} app={app}/>)}
                </Apps>
                <Tray>
                    <TrayItem $gap={15}><Svg $w={8} $h={5} viewBox="0 0 8 5"><path d="M0 5h8L4 0z" fill="#fff"/></Svg></TrayItem>
                    <TrayItem $gap={8}>
                        <Svg $w={17} $h={14} viewBox="0 0 17 14">
                            <path d="M1.500 1v2M4.500 1v2M.500 3.500h5v2l-1 1h-3l-1-1zM3 6.500v4.500h3" fill="none" stroke="#fff"/>
                            <path d="M5.500 3.500h9v7.500h-9" fill="none" stroke="#fff"/>
                            <path d="M7 5h6v4.500H7zM14.500 5.500h1.500v3.500h-1.500z" fill="#fff"/>
                        </Svg>
                    </TrayItem>
                    <TrayItem $gap={10}>
                        <Svg $w={16} $h={16} viewBox="0 0 16 16">
                            <path d="M5.500 3.500h9v7.500h-9M9.500 11v3M6.500 14.500h7" fill="none" stroke="#fff" strokeWidth="1.200"/>
                            <path d="M1.500 1.500h3v4h-3zM3 5.500V14h3" fill="none" stroke="#fff"/>
                        </Svg>
                    </TrayItem>
                    <TrayItem $gap={12}>
                        <Svg $w={14} $h={14} viewBox="0 0 14 14">
                            <path d="M.500 5h2l3-3v10l-3-3h-2zM7.500 5q1.200 2 0 4M9.500 3.500q2.200 3.500 0 7M11.500 2q3.300 5 0 10" fill="none" stroke="#fff" strokeWidth="0.900"/>
                        </Svg>
                    </TrayItem>
                    <TrayItem $gap={9}>
                        <Svg $w={16} $h={16} viewBox="0 0 16 16">
                            <path d="M0 0h16v13h-5.500L8 16l-2.500-3H0z" fill="#fff"/>
                            <path d="M3 4.500h10M3 7h10M3 9.500h6" stroke="#2b7010"/>
                        </Svg>
                    </TrayItem>
                    <TrayItem $gap={15}><Label>DAN</Label></TrayItem>
                    <Clock>
                        <Label $ls={0.07}>9:29 PM</Label><br/>
                        <Label $ls={0.07}>2/20/2015</Label>
                    </Clock>
                </Tray>
            </TaskBar>
        </Desktop>
    );
};

export default App;
